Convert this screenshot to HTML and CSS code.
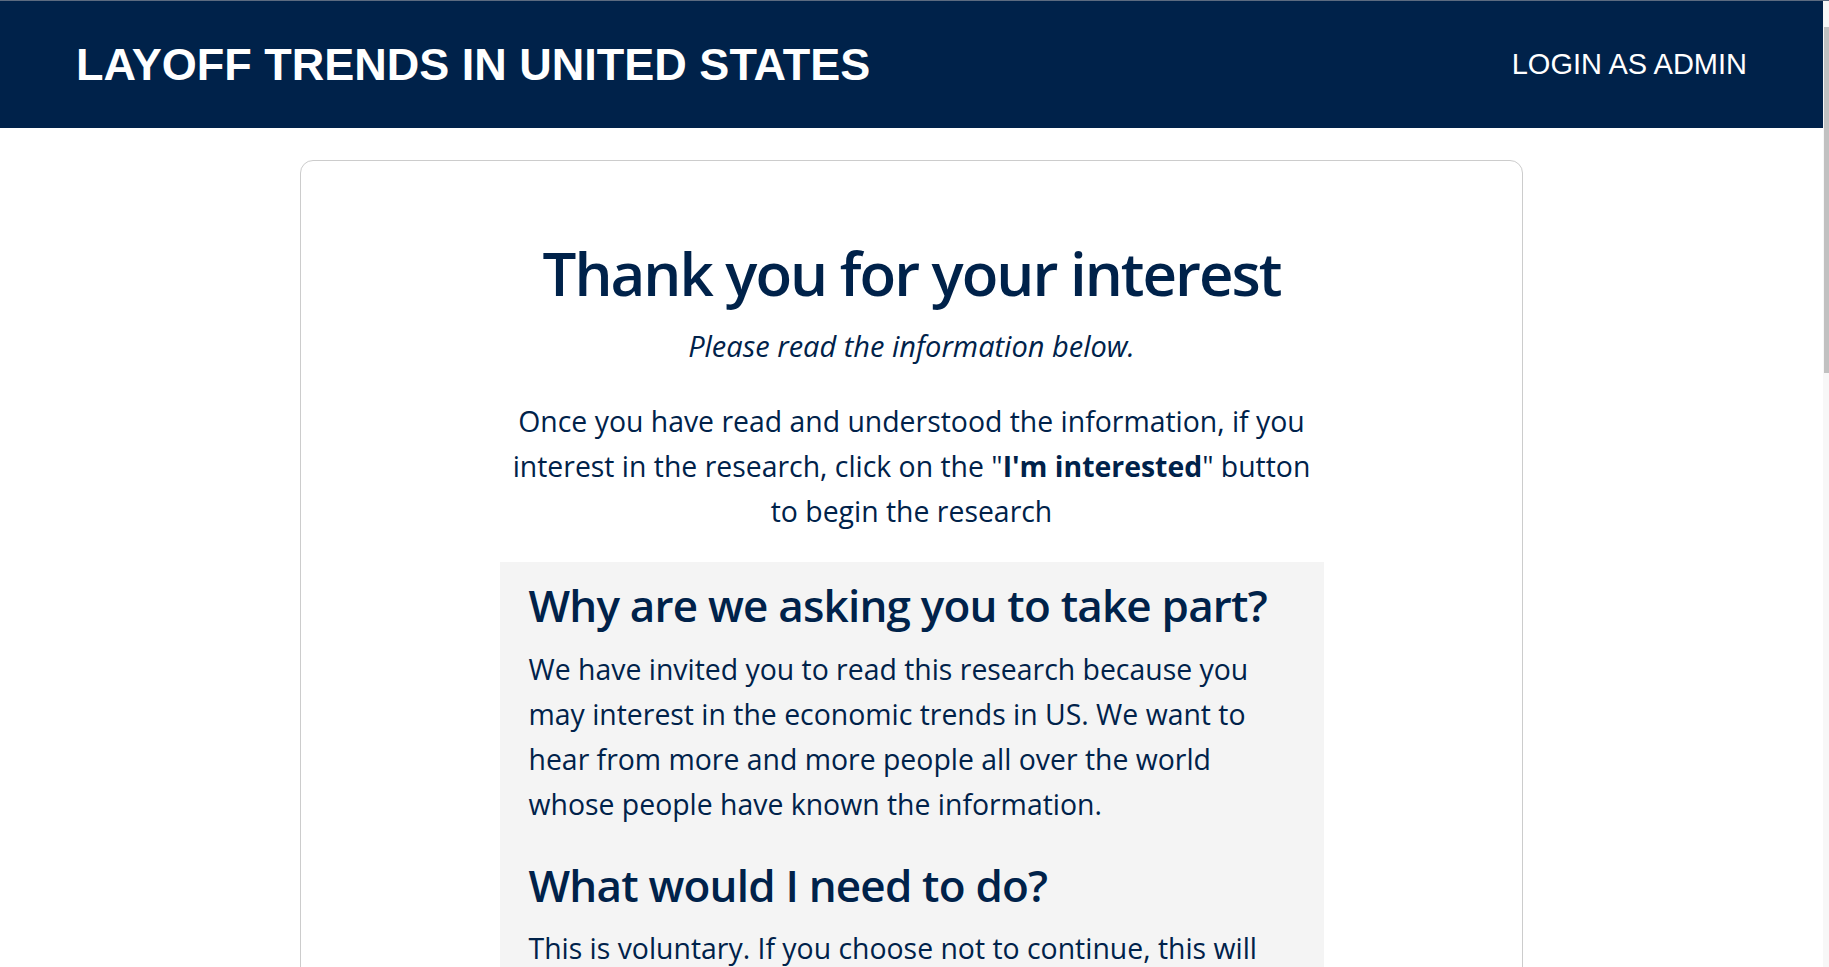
FILE: index.html
```html
<!DOCTYPE html>
<html lang="en">
<head>
<meta charset="utf-8">
<title>Layoff Trends in United States</title>
<link rel="stylesheet" href="styles.css">
</head>
<body>
<header class="topbar">
  <div class="brand">LAYOFF TRENDS IN UNITED STATES</div>
  <a class="login" href="#">LOGIN AS ADMIN</a>
</header>
<main class="card">
  <div class="column">
    <h1 class="title">Thank you for your interest</h1>
    <p class="subtitle">Please read the information below.</p>
    <p class="intro">Once you have read and understood the information, if you interest in the research, click on the "<b>I'm interested</b>" button to begin the research</p>
    <section class="info">
      <h2>Why are we asking you to take part?</h2>
      <p>We have invited you to read this research because you may interest in the economic trends in US. We want to hear from more and more people all over the world whose people have known the information.</p>
      <h2>What would I need to do?</h2>
      <p>This is voluntary. If you choose not to continue, this will not affect you in any way. You can read the summary of layoffs by industry, by state and by year, and look at the charts we have prepared.</p>
      <h2>What will happen to the information?</h2>
      <p>The information shown in this research comes from public records. We do not collect any personal data from you while you read it, and nothing you view here will be shared with anyone else.</p>
      <h2>Who can I contact?</h2>
      <p>If you have any questions about this research, please contact the administrator of the website. We will be glad to answer your questions and hear your feedback about the trends.</p>
      <h2>What are the possible benefits?</h2>
      <p>You may learn more about how layoffs change over time in different companies and industries, and how the economy of the United States is affected by them.</p>
    </section>
    <div class="actions">
      <button class="btn" type="button">I'm interested</button>
    </div>
  </div>
</main>
<div class="scrollbar" aria-hidden="true"><div class="scrollbar-thumb"></div></div>
</body>
</html>
```

FILE: styles.css
```css
html, body {
  margin: 0;
  padding: 0;
}
body {
  font-family: "Open Sans", "Noto Sans", sans-serif;
  color: #00224a;
  background: #ffffff;
  border-top: 1px solid #5c6b80;
  margin-right: 6px;
}
.scrollbar {
  position: fixed;
  top: 0;
  right: 0;
  width: 6px;
  height: 100%;
  background: #f7f7f7;
  border-top: 1px solid #5c6b80;
  box-sizing: border-box;
}
.scrollbar-thumb {
  margin: 26px 0 0 1px;
  width: 5px;
  height: 346px;
  background: #c1c1c1;
}
.topbar {
  height: 127px;
  background: #00224a;
  display: flex;
  align-items: center;
  justify-content: space-between;
  padding: 0 76px;
}
.brand {
  font-family: "Liberation Sans", Arial, sans-serif;
  font-weight: bold;
  font-size: 45px;
  color: #ffffff;
}
.login {
  font-family: "Liberation Sans", Arial, sans-serif;
  font-size: 29px;
  color: #ffffff;
  text-decoration: none;
}
.card {
  width: 1221px;
  margin: 32px auto 0;
  border: 1px solid #cccccc;
  border-radius: 13px;
  padding: 72px 0 80px;
}
.column {
  width: 824px;
  margin: 0 auto;
}
.title {
  margin: 0;
  font-size: 60px;
  line-height: 80px;
  font-weight: 600;
  letter-spacing: -2px;
  text-align: center;
  white-space: nowrap;
}
.subtitle {
  margin: 13px 0 0;
  font-size: 29px;
  line-height: 40px;
  font-style: italic;
  text-align: center;
}
.intro {
  margin: 33px 0 0;
  font-size: 28.4px;
  line-height: 45px;
  text-align: center;
}
.intro b {
  font-weight: 700;
}
.info {
  margin-top: 28px;
  background: #f4f4f4;
  padding: 15px 31px 40px 29px;
}
.info h2 {
  margin: 30px 0 0;
  font-size: 44px;
  line-height: 56px;
  font-weight: 600;
  letter-spacing: -0.8px;
}
.info h2:first-child {
  margin-top: 0;
}
.info p {
  margin: 13.5px 0 0;
  font-size: 28.4px;
  line-height: 45px;
}
.actions {
  display: flex;
  justify-content: center;
  margin-top: 40px;
}
.btn {
  font-family: "Open Sans", sans-serif;
  font-size: 28px;
  font-weight: 600;
  color: #ffffff;
  background: #00224a;
  border: none;
  border-radius: 8px;
  padding: 14px 40px;
}
```
